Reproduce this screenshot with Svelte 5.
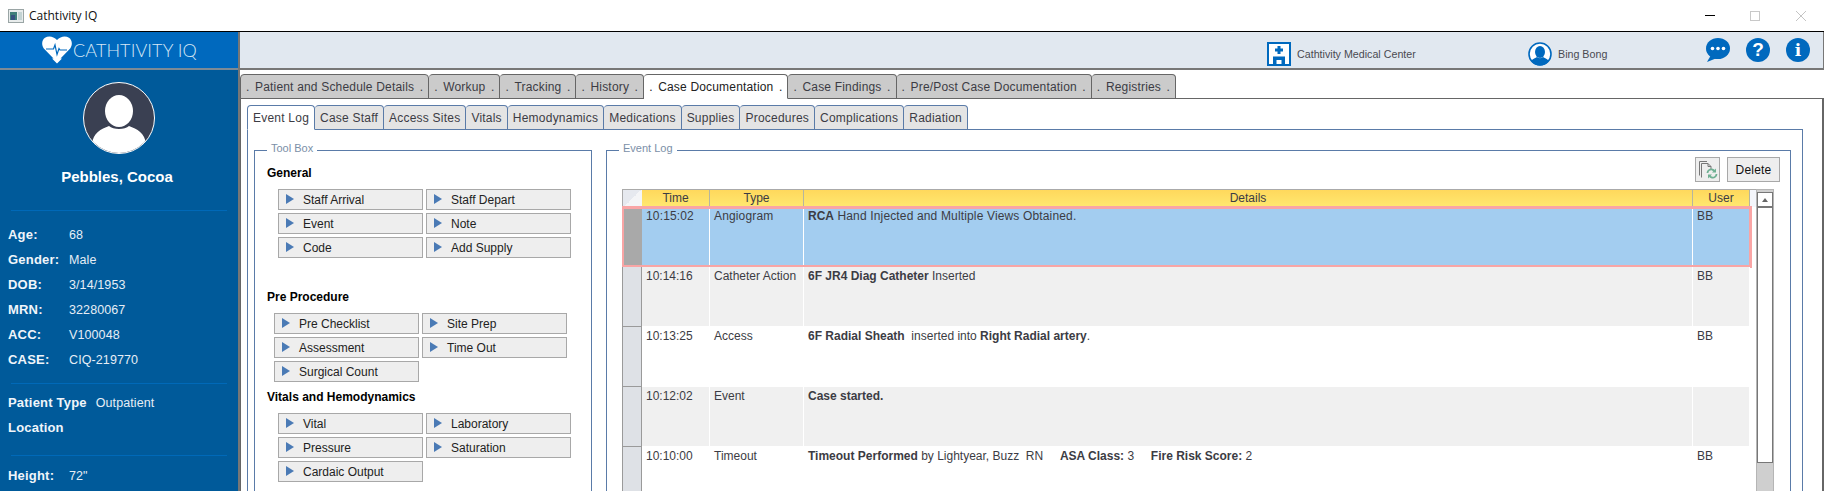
<script lang="ts">
  const patient = [
    ['Age:', '68'],
    ['Gender:', 'Male'],
    ['DOB:', '3/14/1953'],
    ['MRN:', '32280067'],
    ['ACC:', 'V100048'],
    ['CASE:', 'CIQ-219770']
  ]

  const topTabs = [
    'Patient and Schedule Details',
    'Workup',
    'Tracking',
    'History',
    'Case Documentation',
    'Case Findings',
    'Pre/Post Case Documentation',
    'Registries'
  ]
  const activeTop = 'Case Documentation'

  const subTabs = [
    'Event Log',
    'Case Staff',
    'Access Sites',
    'Vitals',
    'Hemodynamics',
    'Medications',
    'Supplies',
    'Procedures',
    'Complications',
    'Radiation'
  ]

  const toolGroups = [
    { title: 'General', items: ['Staff Arrival', 'Staff Depart', 'Event', 'Note', 'Code', 'Add Supply'], cls: 'general' },
    { title: 'Pre Procedure', items: ['Pre Checklist', 'Site Prep', 'Assessment', 'Time Out', 'Surgical Count'], cls: 'pre' },
    { title: 'Vitals and Hemodynamics', items: ['Vital', 'Laboratory', 'Pressure', 'Saturation', 'Cardaic Output'], cls: 'vitals' }
  ]

  const events = [
    { time: '10:15:02', type: 'Angiogram', user: 'BB', details: [['b', 'RCA'], ['', ' Hand Injected and Multiple Views Obtained.']] },
    { time: '10:14:16', type: 'Catheter Action', user: 'BB', details: [['b', '6F JR4 Diag Catheter'], ['', ' Inserted']] },
    { time: '10:13:25', type: 'Access', user: 'BB', details: [['b', '6F Radial Sheath'], ['', '\u00a0 inserted into '], ['b', 'Right Radial artery'], ['', '.']] },
    { time: '10:12:02', type: 'Event', user: '', details: [['b', 'Case started.']] },
    {
      time: '10:10:00',
      type: 'Timeout',
      user: 'BB',
      details: [
        ['b', 'Timeout Performed'],
        ['', ' by Lightyear, Buzz\u00a0 RN\u00a0\u00a0\u00a0\u00a0 '],
        ['b', 'ASA Class:'],
        ['', ' 3\u00a0\u00a0\u00a0\u00a0 '],
        ['b', 'Fire Risk Score:'],
        ['', ' 2']
      ]
    }
  ]
</script>

<div class="window">
  <div class="titlebar">
    <svg class="appicon" viewBox="0 0 16 14" width="16" height="14">
      <rect x="0.5" y="0.5" width="15" height="13" fill="#e8ecec" stroke="#9aa5a5" />
      <rect x="2" y="3" width="7" height="8" fill="#3f7f7a" />
      <rect x="3" y="6" width="4" height="5" fill="#35527f" />
      <rect x="10" y="3" width="4" height="8" fill="#c3d3d3" />
    </svg>
    <span class="apptitle">Cathtivity IQ</span>
    <div class="winctl">
      <span class="min"></span>
      <span class="max"></span>
      <svg class="close" viewBox="0 0 10 10" width="10" height="10"><path d="M0 0L10 10M10 0L0 10" stroke="#c4c4c4" fill="none" /></svg>
    </div>
  </div>

  <div class="shell">
    <aside class="sidebar">
      <div class="logo">
        <svg viewBox="0 0 30 28" width="30" height="28">
          <path d="M15 27.500L10 22.500H11.500L1.800 12.500C-0.800 9 -0.200 4 3 1.800C6.500-0.600 11.500 0.200 15 4C18.500 0.200 23.500-0.600 27 1.800C30.200 4 30.800 9 28.200 12.500L18.500 22.500H20Z" fill="#fff" />
          <path d="M4 13H11.500L13 9L15 18.500L17 12.500L18 14H25" fill="none" stroke="#0069be" stroke-width="1.200" />
        </svg>
        <span>CATHTIVITY IQ</span>
      </div>
      <div class="profile">
        <svg class="avatar" viewBox="0 0 72 72" width="72" height="72">
          <defs>
            <clipPath id="avatar-clip"><circle cx="36" cy="36" r="35" /></clipPath>
          </defs>
          <circle cx="36" cy="36" r="35.500" fill="#3a4052" stroke="#fff" />
          <g clip-path="url(#avatar-clip)">
            <path d="M9 62C10 51 18 47 26 44C30 48 42 48 46 44C54 47 62 51 63 62L63 72H9Z" fill="#fff" />
            <ellipse cx="36" cy="29" rx="14" ry="16" fill="#fff" />
          </g>
        </svg>
        <div class="name">Pebbles, Cocoa</div>
      </div>
      <div class="facts first">
        {#each patient as [label, value]}
          <div class="fact"><b>{label}</b><span>{value}</span></div>
        {/each}
      </div>
      <div class="facts type">
        <div class="fact"><b class="auto">Patient Type</b><span>Outpatient</span></div>
        <div class="fact"><b class="auto">Location</b></div>
      </div>
      <div class="facts last">
        <div class="fact"><b>Height:</b><span>72"</span></div>
      </div>
    </aside>

    <main class="content">
      <header class="appbar">
        <div class="org">
          <svg viewBox="0 0 24 24" width="24" height="24">
            <rect x="1" y="1" width="22" height="22" fill="#fff" stroke="#0069be" stroke-width="2" />
            <path d="M10.500 4H13.500V6.500H16V9.500H13.500V12H10.500V9.500H8V6.500H10.500Z" fill="#0069be" />
            <path d="M6 23V14.500H18V23H14.500V18H9.500V23Z" fill="#0069be" />
          </svg>
          <span>Cathtivity Medical Center</span>
        </div>
        <div class="me">
          <svg viewBox="0 0 24 24" width="24" height="24">
            <circle cx="12" cy="12" r="11" fill="#fff" stroke="#0069be" stroke-width="1.600" />
            <ellipse cx="12" cy="10" rx="5" ry="6" fill="#0069be" />
            <path d="M3 19C5 16.500 7.500 16 9 15C10.500 16.500 13.500 16.500 15 15C16.500 16 19 16.500 21 19C19 22 15.500 23.500 12 23.500C8.500 23.500 5 22 3 19Z" fill="#0069be" />
          </svg>
          <span>Bing Bong</span>
        </div>
        <div class="actions">
          <svg viewBox="0 0 24 24" width="24" height="24">
            <ellipse cx="12" cy="10.500" rx="12" ry="10.500" fill="#0069be" />
            <path d="M5 17L1 24L11 20Z" fill="#0069be" />
            <circle cx="6.500" cy="10.500" r="1.800" fill="#fff" />
            <circle cx="12" cy="10.500" r="1.800" fill="#fff" />
            <circle cx="17.500" cy="10.500" r="1.800" fill="#fff" />
          </svg>
          <span class="round help">?</span>
          <span class="round info">i</span>
        </div>
      </header>

      <nav class="toptabs">
        {#each topTabs as tab}
          <div class="toptab" class:active={tab === activeTop}><i>.</i><span>{tab}</span><i>.</i></div>
        {/each}
      </nav>

      <section class="toppanel">
        <nav class="subtabs">
          {#each subTabs as tab, i}
            <div class="subtab" class:active={i === 0}>{tab}</div>
          {/each}
        </nav>

        <div class="subpanel">
          <fieldset class="toolbox">
            <legend>Tool Box</legend>
            {#each toolGroups as group}
              <h4 class={group.cls}>{group.title}</h4>
              <div class="tools {group.cls}">
                {#each group.items as item}
                  <button class="tool"><span class="tri"></span>{item}</button>
                {/each}
              </div>
            {/each}
          </fieldset>

          <fieldset class="log">
            <legend>Event Log</legend>
            <div class="logbar">
              <button class="iconbtn" aria-label="Refresh">
                <svg viewBox="0 0 20 20" width="20" height="20">
                  <path d="M1.500 15.500V1.500H9" fill="none" stroke="#777" />
                  <path d="M3.500 17.500V3.500H10L13 6.500V9" fill="#eee" stroke="#777" />
                  <path d="M10 3.500V6.500H13" fill="none" stroke="#777" />
                  <path d="M9.500 13C9.500 10.500 12 9 14 9.500C15 9.700 16 10.300 16.500 11" fill="none" stroke="#6fb093" stroke-width="1.800" />
                  <path d="M18 8.500V12.500H14Z" fill="#6fb093" />
                  <path d="M18.500 14C18.500 16.500 16 18 14 17.500C13 17.300 12 16.700 11.500 16" fill="none" stroke="#6fb093" stroke-width="1.800" />
                  <path d="M10 18.500V14.500H14Z" fill="#6fb093" />
                </svg>
              </button>
              <button class="delete">Delete</button>
            </div>

            <div class="tablewrap">
              <div class="table">
                <div class="thead">
                  <div class="corner"></div>
                  <div>Time</div>
                  <div>Type</div>
                  <div>Details</div>
                  <div>User</div>
                  <div class="spare"></div>
                </div>
                {#each events as ev, i}
                  <div class="row" class:selected={i === 0} class:alt={i % 2 === 1}>
                    <div class="rowhead"></div>
                    <div class="cell">{ev.time}</div>
                    <div class="cell">{ev.type}</div>
                    <div class="cell">
                      {#each ev.details as [kind, text]}{#if kind === 'b'}<b>{text}</b>{:else}{text}{/if}{/each}
                    </div>
                    <div class="cell">{ev.user}</div>
                  </div>
                {/each}
              </div>
              <div class="scrollbar">
                <div class="thumb"><div class="up"></div></div>
              </div>
            </div>
          </fieldset>
        </div>
      </section>
    </main>
  </div>
</div>

<style>
  :global(body) {
    margin: 0;
    background: #fff;
  }
  .window {
    width: 1824px;
    height: 491px;
    overflow: hidden;
    font-family: 'Liberation Sans', Arial, sans-serif;
    font-size: 12px;
    color: #3c3c44;
  }
  .titlebar {
    height: 32px;
    display: flex;
    align-items: center;
    padding-left: 8px;
    box-sizing: border-box;
    border-bottom: 1px solid #000;
  }
  .apptitle {
    margin-left: 5px;
    font-family: 'Open Sans', sans-serif;
    font-size: 12px;
    color: #111;
  }
  .winctl {
    margin-left: auto;
    margin-right: 18px;
    display: flex;
    align-items: center;
  }
  .min {
    width: 10px;
    height: 1px;
    background: #000;
  }
  .max {
    width: 8px;
    height: 8px;
    border: 1px solid #c8c8c8;
    margin-left: 35px;
  }
  .close {
    margin-left: 36px;
  }

  .shell {
    display: grid;
    grid-template-columns: 238px 1fr;
    height: 459px;
  }
  .sidebar {
    background: #005a9a;
    border-right: 2px solid #777;
    width: 240px;
    box-sizing: border-box;
    color: #e6eef6;
  }
  .logo {
    height: 38px;
    box-sizing: border-box;
    background: #0069be;
    border-bottom: 2px solid #7d8a96;
    display: flex;
    align-items: center;
    padding-left: 42px;
    gap: 1px;
    font-family: Lato, sans-serif;
    font-size: 18px;
    font-weight: 300;
    letter-spacing: 0.1px;
    color: #d6e7f5;
  }
  .profile {
    height: 141px;
    border-bottom: 1px solid #0069b8;
    margin: 0 11px;
    text-align: center;
    padding-top: 12px;
    box-sizing: border-box;
  }
  .avatar {
    display: block;
    margin: 0 auto;
  }
  .name {
    margin-top: 14px;
    padding-right: 4px;
    font-weight: bold;
    font-size: 15px;
    color: #fff;
  }
  .facts {
    margin: 0 11px;
    border-bottom: 1px solid #0069b8;
    font-size: 12.500px;
    letter-spacing: 0.1px;
  }
  .facts.first {
    padding-top: 11px;
    padding-bottom: 11px;
  }
  .facts.type {
    padding-top: 6px;
    padding-bottom: 15px;
  }
  .facts.last {
    border: 0;
    padding-top: 7px;
  }
  .fact {
    height: 25px;
    display: flex;
    align-items: center;
    margin-left: -3px;
  }
  .fact b {
    width: 61px;
    font-size: 13px;
    letter-spacing: 0.2px;
    color: #f0f5fa;
  }
  .fact b.auto {
    width: auto;
    margin-right: 9px;
  }

  .content {
    min-width: 0;
    margin-left: 2px;
  }
  .appbar {
    height: 38px;
    box-sizing: border-box;
    background: #e1e8f0;
    border-bottom: 2px solid #777;
    border-right: 1px solid #777;
    display: flex;
    align-items: center;
    padding-left: 1027px;
    font-size: 10.700px;
    color: #4a4a50;
  }
  .org,
  .me {
    display: flex;
    align-items: center;
    gap: 6px;
    margin-top: 8px;
  }
  .org {
    width: 261px;
  }
  .me {
    width: 178px;
  }
  .actions {
    display: flex;
    align-items: center;
    gap: 16px;
  }
  .actions svg {
    display: block;
  }
  .round {
    width: 24px;
    height: 24px;
    border-radius: 50%;
    background: #0069be;
    color: #fff;
    font-weight: bold;
    text-align: center;
    line-height: 24px;
    font-size: 19px;
  }
  .info {
    font-family: 'DejaVu Serif', serif;
    font-size: 17px;
  }

  .toptabs {
    display: flex;
    margin-top: 4px;
    height: 24px;
  }
  .toptab {
    display: flex;
    align-items: center;
    justify-content: space-between;
    gap: 5.500px;
    padding: 0 5px;
    background: #cbcbcb;
    border: 1px solid #666;
    border-left: 0;
    border-radius: 4px 4px 0 0;
    box-sizing: border-box;
    height: 25px;
    font-size: 12px;
    letter-spacing: 0.18px;
  }
  .toptab:first-child {
    border-left: 1px solid #666;
  }
  .toptab i {
    font-style: normal;
  }
  .toptab.active {
    background: #fff;
    border-bottom-color: #fff;
    color: #222;
  }
  .toppanel {
    border-top: 1px solid #666;
    border-left: 1px solid #666;
    border-right: 2px solid #666;
    padding: 6px 19px 0 6px;
    height: 400px;
  }
  .subtabs {
    display: flex;
    height: 24px;
  }
  .subtab {
    padding: 0 5px;
    height: 25px;
    line-height: 24px;
    box-sizing: border-box;
    background: #e4e4e4;
    border: 1px solid #5a7ba8;
    border-left: 0;
    border-radius: 4px 4px 0 0;
    letter-spacing: 0.22px;
  }
  .subtab.active {
    background: #fff;
    border-left: 1px solid #5a7ba8;
    border-bottom-color: #fff;
    position: relative;
  }
  .subpanel {
    border-top: 1px solid #5a7ba8;
    border-left: 1px solid #5a7ba8;
    border-right: 1px solid #5a7ba8;
    display: flex;
    padding: 11px 11px 0 6px;
    gap: 14px;
    height: 400px;
  }
  fieldset {
    margin: 0;
    padding: 0;
    border: 1px solid #5a7ba8;
    min-width: 0;
    height: 380px;
  }
  legend {
    margin-left: 12px;
    padding: 0 4px 4px;
    font-size: 11px;
    line-height: 14px;
    color: #7b8fa8;
  }
  .toolbox {
    width: 338px;
    box-sizing: border-box;
    flex: none;
  }
  h4 {
    margin: 0 0 9px 12px;
    font-size: 12px;
    line-height: 14px;
    color: #000;
  }
  h4.general {
    margin-top: 7px;
  }
  h4.pre {
    margin-top: 32px;
  }
  h4.vitals {
    margin-top: 8px;
  }
  .tools {
    display: grid;
    grid-template-columns: 145px 145px;
    grid-auto-rows: 21px;
    gap: 3px;
    padding-left: 23px;
  }
  .tools.pre {
    padding-left: 19px;
  }
  .tool {
    display: flex;
    align-items: center;
    padding: 0 0 0 7px;
    margin: 0;
    font: inherit;
    color: #222;
    background: #eeeeee;
    border: 1px solid #a8a8a8;
    text-align: left;
  }
  .tri {
    width: 0;
    height: 0;
    border-left: 8px solid #4a7ab5;
    border-top: 5.500px solid transparent;
    border-bottom: 5.500px solid transparent;
    margin-right: 9px;
    margin-top: -1px;
  }
  .log {
    flex: 1;
    box-sizing: border-box;
  }
  .logbar {
    display: flex;
    justify-content: flex-end;
    gap: 7px;
    margin-top: -2px;
    padding: 0 10px 0 0;
    height: 32px;
    box-sizing: border-box;
  }
  .logbar button {
    height: 25px;
    margin: 0;
    padding: 0;
    background: #eeeeee;
    border: 1px solid #a8a8a8;
    box-sizing: border-box;
    font: inherit;
    color: #111;
  }
  .iconbtn {
    width: 25px;
    display: flex;
    align-items: center;
    justify-content: center;
  }
  .delete {
    width: 53px;
    letter-spacing: 0.2px;
  }
  .tablewrap {
    display: flex;
    margin-left: 15px;
    margin-right: 14px;
  }
  .table {
    width: 1135px;
    border-top: 1px solid #aaa;
    box-sizing: border-box;
  }
  .thead {
    display: grid;
    grid-template-columns: 20px 68px 94px 889px 57px 7px;
    width: 1135px;
    height: 17px;
  }
  .row {
    display: grid;
    grid-template-columns: 20px 68px 94px 889px 57px;
    width: 1128px;
  }
  .thead div {
    background: linear-gradient(#ffd85c, #ffe870);
    border-right: 1px solid #b5b5a0;
    text-align: center;
    line-height: 16px;
  }
  .thead .corner {
    background: linear-gradient(135deg, #e6e9ef 50%, #f4f5f7 50%);
    border-left: 1px solid #aaa;
    border-right: 0;
    box-sizing: border-box;
  }
  .thead .spare {
    background: #f4f6fb;
    border: 0;
  }
  .row {
    height: 60px;
    background: #fff;
    position: relative;
  }
  .rowhead {
    background: #dee1e6;
    border-left: 1px solid #9a9a9a;
    border-bottom: 1px solid #9a9a9a;
    border-right: 1px solid #9a9a9a;
    box-sizing: border-box;
  }
  .cell {
    padding: 2px 3px 0 4px;
    line-height: 14px;
    border-right: 1px solid #fff;
    white-space: nowrap;
  }
  .cell b {
    font-weight: bold;
    letter-spacing: 0;
  }
  .row.alt .cell {
    background: #f0f0f0;
    border-bottom: 1px solid #fff;
  }
  .row.selected .cell {
    background: #a3cdf0;
    letter-spacing: 0.15px;
  }
  .row.selected .rowhead {
    background: #a9a9a9;
    border: 0;
  }
  .row.selected::after {
    content: '';
    position: absolute;
    inset: -1px -2px -1px 0;
    border: 3px solid #f9a5a5;
    border-left-width: 2px;
    pointer-events: none;
  }
  .scrollbar {
    width: 18px;
    background: #cfcfcf;
    border: 1px solid #b5b5b5;
    border-bottom: 0;
    box-sizing: border-box;
    padding-top: 2px;
    height: 302px;
    margin-left: -1px;
  }
  .thumb {
    height: 271px;
    background: #fff;
    border: 1px solid #777;
    box-sizing: border-box;
  }
  .up {
    height: 13px;
    border-bottom: 2px solid #777;
    position: relative;
  }
  .up::after {
    content: '';
    position: absolute;
    left: 4px;
    top: 5px;
    border-left: 3.500px solid transparent;
    border-right: 3.500px solid transparent;
    border-bottom: 4px solid #666;
  }
</style>
